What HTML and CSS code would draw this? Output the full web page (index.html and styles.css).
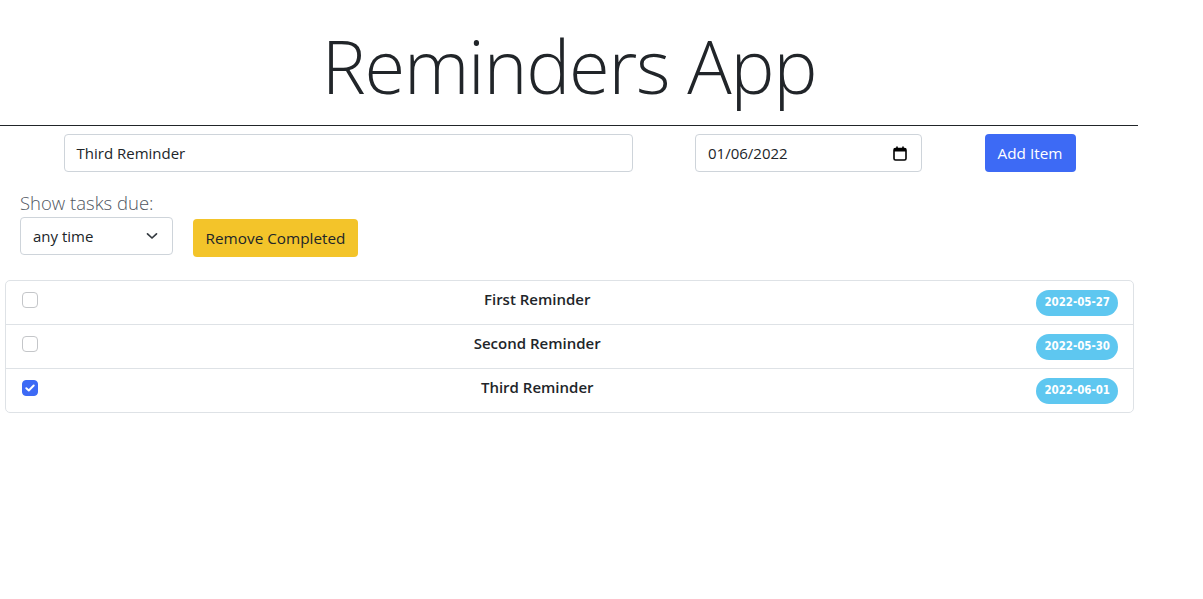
FILE: index.html
```html
<!DOCTYPE html>
<html lang="en">
<head>
<meta charset="utf-8">
<title>Reminders App</title>
<link rel="stylesheet" href="styles.css">
</head>
<body>
<div class="app">
  <header class="header">
    <h1 class="title">Reminders App</h1>
  </header>

  <div class="add-row">
    <div class="field field-text">Third Reminder</div>
    <div class="field field-date">
      <span>01/06/2022</span>
      <svg class="cal" width="14" height="15" viewBox="0 0 14 15" aria-hidden="true">
        <rect x="1" y="2.5" width="12" height="11.5" rx="1.5" fill="none" stroke="#000" stroke-width="1.6"/>
        <rect x="1" y="2.5" width="12" height="3" fill="#000"/>
        <rect x="3.2" y="0.5" width="1.6" height="3" fill="#000"/>
        <rect x="9.2" y="0.5" width="1.6" height="3" fill="#000"/>
      </svg>
    </div>
    <button class="btn btn-primary">Add Item</button>
  </div>

  <div class="filter-row">
    <div class="filter">
      <div class="filter-label">Show tasks due:</div>
      <div class="select">
        <span>any time</span>
        <svg class="chev" width="12" height="8" viewBox="0 0 12 8" aria-hidden="true">
          <path d="M1.5 1.8 L6 6 L10.5 1.8" fill="none" stroke="#343a40" stroke-width="1.7" stroke-linecap="round" stroke-linejoin="round"/>
        </svg>
      </div>
    </div>
    <button class="btn btn-warning">Remove Completed</button>
  </div>

  <ul class="list">
    <li class="item">
      <span class="check"></span>
      <span class="item-label">First Reminder</span>
      <span class="badge">2022-05-27</span>
    </li>
    <li class="item">
      <span class="check"></span>
      <span class="item-label">Second Reminder</span>
      <span class="badge">2022-05-30</span>
    </li>
    <li class="item">
      <span class="check checked">
        <svg width="10" height="8" viewBox="0 0 10 8" aria-hidden="true">
          <path d="M1.3 4.2 L3.8 6.5 L8.7 1.5" fill="none" stroke="#fff" stroke-width="1.9" stroke-linecap="round" stroke-linejoin="round"/>
        </svg>
      </span>
      <span class="item-label">Third Reminder</span>
      <span class="badge">2022-06-01</span>
    </li>
  </ul>
</div>
</body>
</html>
```

FILE: styles.css
```css
* { box-sizing: border-box; }

body {
  margin: 0;
  font-family: "Open Sans", "Noto Sans", sans-serif;
  font-size: 15px;
  color: #212529;
  background: #fff;
}

.app {
  width: 1138px;
}

.header {
  border-bottom: 1px solid #212529;
  padding-top: 18px;
  padding-bottom: 11px;
}

.title {
  margin: 0;
  text-align: center;
  font-size: 74px;
  font-weight: 300;
  line-height: 96px;
  letter-spacing: -1.2px;
  color: #212529;
}

.add-row {
  display: flex;
  justify-content: space-evenly;
  margin-top: 8px;
  padding-left: 1px;
}

.field {
  height: 38px;
  border: 1px solid #ced4da;
  border-radius: 4px;
  padding: 6px 12px;
  font-size: 15px;
  line-height: 24px;
  color: #212529;
  background: #fff;
}

.field-text { width: 569px; }

.field-date {
  width: 227px;
  display: flex;
  align-items: center;
  justify-content: space-between;
  padding-right: 14px;
}

.cal { display: block; }

.btn {
  height: 38px;
  border: 1px solid transparent;
  border-radius: 4px;
  padding: 6px 0;
  font-family: inherit;
  font-size: 15.3px;
  line-height: 24px;
  white-space: nowrap;
  text-align: center;
  cursor: pointer;
}

.btn-primary {
  width: 91px;
  background: #3d6af5;
  color: #fff;
}

.btn-warning {
  width: 165px;
  background: #f3c42a;
  color: #212529;
  margin-bottom: -2px;
}

.filter-row {
  display: flex;
  align-items: flex-end;
  gap: 20px;
  padding-left: 20px;
  margin-top: 21px;
}

.filter-label {
  font-size: 18.5px;
  font-weight: 300;
  line-height: 20px;
  padding-bottom: 4px;
  color: #4f5661;
}

.select {
  width: 153px;
  height: 38px;
  border: 1px solid #ced4da;
  border-radius: 4px;
  padding: 6px 14px 6px 12px;
  line-height: 24px;
  display: flex;
  align-items: center;
  justify-content: space-between;
}

.chev { display: block; }

.list {
  list-style: none;
  margin: 25px 0 0 5px;
  padding: 0;
  width: 1129px;
  border: 1px solid #dee2e6;
  border-radius: 5px;
}

.item {
  display: flex;
  align-items: flex-start;
  height: 44px;
  padding: 0 15px 0 16px;
  border-top: 1px solid #dee2e6;
}

.item:first-child {
  border-top: none;
  height: 43px;
}

.check {
  width: 16px;
  height: 16px;
  margin-top: 11px;
  border: 1px solid #c4c6c9;
  border-radius: 4px;
  background: #fff;
  display: flex;
  align-items: center;
  justify-content: center;
  flex-shrink: 0;
}

.check.checked {
  background: #3d6af5;
  border-color: #3d6af5;
}

.check svg { display: block; }

.item-label {
  flex: 1;
  text-align: center;
  font-weight: 600;
  line-height: 24px;
  margin-top: 6px;
}

.badge {
  margin-top: 9px;
  height: 26px;
  padding: 0 8px;
  border-radius: 13px;
  background: #5ec7f0;
  color: #fff;
  font-family: "DejaVu Sans", sans-serif;
  font-stretch: condensed;
  font-weight: 700;
  font-size: 11.4px;
  line-height: 25px;
  white-space: nowrap;
}
```
